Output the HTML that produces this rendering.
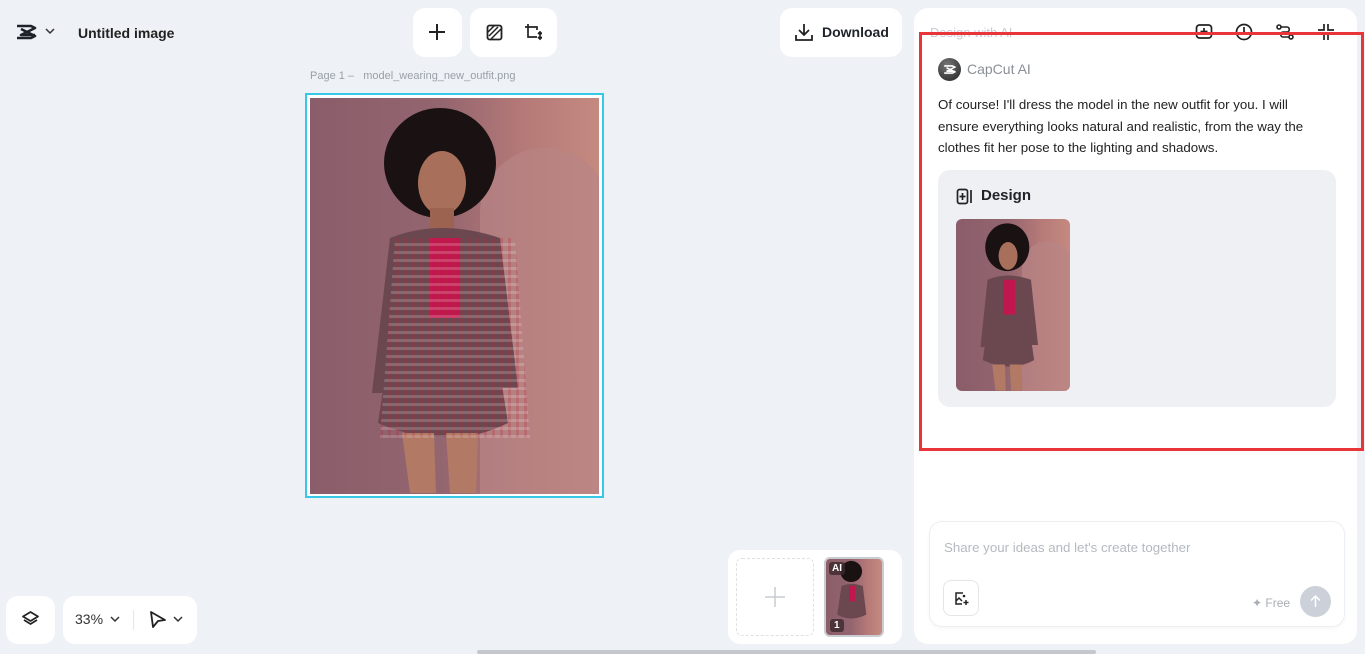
<!DOCTYPE html>
<html><head><meta charset="utf-8"><style>
*{box-sizing:border-box;margin:0;padding:0}
body{width:1365px;height:654px;overflow:hidden;background:#eef1f5;font-family:"Liberation Sans",sans-serif;position:relative;color:#1f2329}
.card{position:absolute;background:#fff;border-radius:12px}
.abs{position:absolute}
svg{display:block}
.photo{background:linear-gradient(90deg,#8a5d6a 0%,#93656f 45%,#b67a78 75%,#c48a80 100%);overflow:hidden;position:relative}
</style></head><body>
<svg class="abs" style="left:15px;top:23px" width="22" height="18" viewBox="0 0 22 18"><path d="M2 3h14l4 2-14 7 14 0 M2 15h14l4-2-14-7" fill="none" stroke="#1f2329" stroke-width="2.6" stroke-linejoin="round"/></svg>
<svg class="abs" style="left:45px;top:28px" width="10" height="7" viewBox="0 0 10 7"><path d="M1 1l4 4 4-4" fill="none" stroke="#333" stroke-width="1.5"/></svg>
<div class="abs" style="left:78px;top:25px;font-size:14px;font-weight:bold;color:#222">Untitled image</div>
<div class="card" style="left:413px;top:8px;width:49px;height:49px"><svg style="margin:15px" width="18" height="18"><path d="M9 1v16M1 9h16" stroke="#222" stroke-width="2"/></svg></div>
<div class="card" style="left:470px;top:8px;width:87px;height:49px">
<svg class="abs" style="left:16px;top:16px" width="17" height="17" viewBox="0 0 17 17"><rect x="1.5" y="1.5" width="14" height="14" rx="2" fill="none" stroke="#222" stroke-width="1.8"/><path d="M3 12L12 3M5 15L15 5M2 8L8 2" stroke="#222" stroke-width="1.5"/></svg>
<svg class="abs" style="left:54px;top:15px" width="18" height="18" viewBox="0 0 18 18"><path d="M4 1v3H1M4 4h9v3M4 4v10h9M16 9v7M14 11l2-2 2 2M14 14l2 2 2-2" fill="none" stroke="#222" stroke-width="1.7"/></svg></div>
<div class="card" style="left:780px;top:8px;width:122px;height:49px">
<svg class="abs" style="left:15px;top:15px" width="18" height="18" viewBox="0 0 18 18"><path d="M9 1v11M4 7l5 5 5-5M1 12v5h16v-5" fill="none" stroke="#222" stroke-width="1.8"/></svg>
<div class="abs" style="left:42px;top:16px;font-size:14px;font-weight:bold">Download</div></div>
<div class="abs" style="left:310px;top:70px;font-size:11px;color:#9aa0a8">Page 1 –&nbsp;&nbsp; model_wearing_new_outfit.png</div>
<div class="abs" style="left:305px;top:93px;width:299px;height:405px;border:2px solid #35c9e6;padding:3px;background:#fff">
<div class="photo" style="width:289px;height:396px">
<div class="abs" style="left:170px;top:50px;width:130px;height:360px;border-radius:65px 65px 0 0;background:#b88584;opacity:.7"></div>
<svg class="abs" style="left:0;top:0" width="289" height="396" viewBox="0 0 289 396">
<ellipse cx="130" cy="65" rx="56" ry="55" fill="#1a1212"/>
<ellipse cx="132" cy="85" rx="24" ry="32" fill="#a8705a"/>
<path d="M120 110h24v25h-24z" fill="#9c6450"/>
<path d="M80 140q50-20 110 0l18 150h-20l-5-60 15 95q-60 30-130 0l15-100-10 70H62z" fill="#6b4850"/>
<path d="M120 140h30v80h-30z" fill="#c2164f"/>
<path d="M92 335h32l2 60h-26zM136 335h32l-2 60h-26z" fill="#b27a64"/>
</svg>
<div class="abs" style="left:70px;top:140px;width:150px;height:200px;background:repeating-linear-gradient(0deg,rgba(255,255,255,.18) 0 3px,transparent 3px 8px),repeating-linear-gradient(90deg,rgba(180,40,60,.25) 0 3px,transparent 3px 8px);clip-path:polygon(10% 0,90% 0,100% 100%,0 100%)"></div>
</div></div>
<div class="card" style="left:6px;top:596px;width:49px;height:48px"><svg style="margin:15px 16px" width="17" height="17" viewBox="0 0 17 17"><path d="M8.5 1L16 5.5 8.5 10 1 5.5z" fill="none" stroke="#222" stroke-width="1.7" stroke-linejoin="round"/><path d="M2 9l6.5 4L15 9" fill="none" stroke="#222" stroke-width="1.7"/></svg></div>
<div class="card" style="left:63px;top:596px;width:134px;height:48px">
<div class="abs" style="left:12px;top:15px;font-size:14px;color:#333">33%</div>
<svg class="abs" style="left:47px;top:20px" width="10" height="7"><path d="M1 1l4 4 4-4" fill="none" stroke="#333" stroke-width="1.5"/></svg>
<div class="abs" style="left:70px;top:14px;width:1px;height:20px;background:#e5e7eb"></div>
<svg class="abs" style="left:86px;top:14px" width="18" height="20" viewBox="0 0 18 20"><path d="M2 2l14 8-7 1-5 6z" fill="none" stroke="#222" stroke-width="1.8" stroke-linejoin="round"/></svg>
<svg class="abs" style="left:110px;top:20px" width="10" height="7"><path d="M1 1l4 4 4-4" fill="none" stroke="#333" stroke-width="1.5"/></svg></div>
<div class="card" style="left:728px;top:550px;width:174px;height:94px">
<div class="abs" style="left:8px;top:8px;width:78px;height:78px;border:1.5px dashed #dde0e5;border-radius:6px"><svg style="margin:27px" width="22" height="22"><path d="M11 1v20M1 11h20" stroke="#c8ccd2" stroke-width="1.5"/></svg></div>
<div class="abs photo" style="left:96px;top:7px;width:60px;height:80px;border:2px solid #c9ccd1;border-radius:6px">
<svg class="abs" width="56" height="76" viewBox="0 0 289 396" preserveAspectRatio="none"><ellipse cx="130" cy="65" rx="56" ry="55" fill="#1a1212"/><path d="M80 140q50-20 110 0l18 150q-80 40-150 0z" fill="#6b4850"/><path d="M120 140h30v80h-30z" fill="#c2164f"/></svg>
<div class="abs" style="left:3px;top:3px;background:rgba(60,40,45,.8);color:#fff;font-size:10px;font-weight:bold;padding:1px 3px;border-radius:3px">AI</div>
<div class="abs" style="left:4px;bottom:3px;background:rgba(60,40,45,.8);color:#fff;font-size:10px;font-weight:bold;padding:1px 4px;border-radius:3px">1</div></div></div>
<div class="abs" style="left:477px;top:650px;width:619px;height:4px;background:#c4c7cc;border-radius:2px"></div>
<div class="card" style="left:914px;top:8px;width:443px;height:636px;border-radius:14px">
<div class="abs" style="left:16px;top:17px;font-size:13px;color:#c8ccd2">Design with AI</div>
<svg class="abs" style="left:281px;top:15px" width="18" height="18" viewBox="0 0 18 18"><rect x="1.5" y="2" width="15" height="13" rx="3" fill="none" stroke="#222" stroke-width="1.7"/><path d="M9 5v7M5.5 8.5h7" stroke="#222" stroke-width="1.7"/></svg>
<svg class="abs" style="left:321px;top:15px" width="18" height="18" viewBox="0 0 18 18"><circle cx="9" cy="9" r="7.5" fill="none" stroke="#222" stroke-width="1.7"/><path d="M9 4v5l3 2" fill="none" stroke="#222" stroke-width="1.7"/></svg>
<svg class="abs" style="left:362px;top:15px" width="18" height="18" viewBox="0 0 18 18"><circle cx="3" cy="4" r="2" fill="none" stroke="#222" stroke-width="1.6"/><circle cx="15" cy="14" r="2" fill="none" stroke="#222" stroke-width="1.6"/><path d="M5 4h6c3 0 3 5 0 5H7c-3 0-3 5 0 5h6" fill="none" stroke="#222" stroke-width="1.6"/></svg>
<svg class="abs" style="left:403px;top:15px" width="18" height="18" viewBox="0 0 18 18"><path d="M7 1v6H1M11 1v6h6M7 17v-6H1M11 17v-6h6" fill="none" stroke="#222" stroke-width="1.7"/></svg>
<div class="abs" style="left:24px;top:50px;width:23px;height:23px;border-radius:50%;background:radial-gradient(circle at 40% 30%,#777,#222)"><svg style="margin:6px 5px" width="13" height="11" viewBox="0 0 22 18"><path d="M2 3h14l4 2-14 7 14 0 M2 15h14l4-2-14-7" fill="none" stroke="#fff" stroke-width="2.6"/></svg></div>
<div class="abs" style="left:53px;top:53px;font-size:14px;color:#8a8f96">CapCut AI</div>
<div class="abs" style="left:24px;top:86px;width:383px;font-size:13.3px;line-height:21.5px;color:#222">Of course! I'll dress the model in the new outfit for you. I will ensure everything looks natural and realistic, from the way the clothes fit her pose to the lighting and shadows.</div>
<div class="abs" style="left:24px;top:162px;width:398px;height:237px;background:#eef0f4;border-radius:12px">
<svg class="abs" style="left:18px;top:18px" width="17" height="17" viewBox="0 0 17 17"><rect x="1.5" y="1.5" width="10" height="14" rx="2" fill="none" stroke="#222" stroke-width="1.7"/><path d="M15 2v13M6.5 5v7M3.5 8.5h6" stroke="#222" stroke-width="1.7"/></svg>
<div class="abs" style="left:43px;top:17px;font-size:15px;font-weight:bold">Design</div>
<div class="abs photo" style="left:18px;top:49px;width:114px;height:172px;border-radius:6px">
<div class="abs" style="left:66px;top:22px;width:52px;height:160px;border-radius:26px 26px 0 0;background:#b88584;opacity:.7"></div>
<svg class="abs" width="114" height="172" viewBox="0 0 289 396" preserveAspectRatio="none"><ellipse cx="130" cy="65" rx="56" ry="55" fill="#1a1212"/><ellipse cx="132" cy="85" rx="24" ry="32" fill="#a8705a"/><path d="M80 140q50-20 110 0l18 150h-20l-5-60 15 95q-60 30-130 0l15-100-10 70H62z" fill="#6b4850"/><path d="M120 140h30v80h-30z" fill="#c2164f"/><path d="M92 335h32l2 60h-26zM136 335h32l-2 60h-26z" fill="#b27a64"/></svg></div></div>
<div class="abs" style="left:16px;top:514px;width:414px;height:104px;border-radius:12px;box-shadow:0 0 0 1px #eceef1,0 2px 6px rgba(0,0,0,.05);background:#fff">
<div class="abs" style="left:14px;top:18px;font-size:13.3px;color:#b4b9c0">Share your ideas and let's create together</div>
<div class="abs" style="left:13px;top:58px;width:36px;height:36px;border:1px solid #e3e5e9;border-radius:8px"><svg style="margin:10px" width="15" height="15" viewBox="0 0 15 15"><path d="M9 2H2v11h6M2 10l3-3 3 3" fill="none" stroke="#222" stroke-width="1.5"/><circle cx="10" cy="5" r="1.3" fill="#222"/><path d="M12 9v5M9.5 11.5h5" stroke="#222" stroke-width="1.5"/></svg></div>
<div class="abs" style="left:322px;top:74px;font-size:12px;color:#a8adb4">✦ Free</div>
<div class="abs" style="left:370px;top:64px;width:31px;height:31px;border-radius:50%;background:#ccd1d9"><svg style="margin:8px" width="15" height="15"><path d="M7.5 13V2M3 6.5l4.5-4.5 4.5 4.5" fill="none" stroke="#fff" stroke-width="1.5"/></svg></div></div>
</div>
<div class="abs" style="left:919px;top:32px;width:445px;height:419px;border:3px solid #e8353a"></div>
</body></html>
